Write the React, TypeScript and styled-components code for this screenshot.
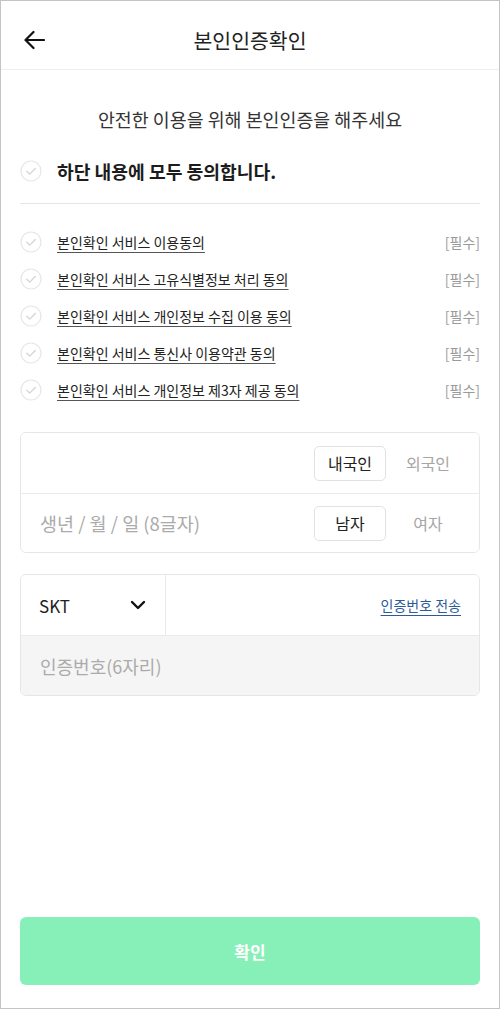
import React from "react";
import styled, { createGlobalStyle } from "styled-components";

const GlobalStyle = createGlobalStyle`
  html, body {
    margin: 0;
    padding: 0;
    background: #FFFFFF;
  }
  * {
    box-sizing: border-box;
  }
  body {
    font-family: "Noto Sans CJK KR", "Noto Sans", sans-serif;
    color: #222222;
  }
`;

const Frame = styled.div`
  width: 500px;
  height: 1009px;
  border: 1px solid #C4C4C4;
  display: flex;
  flex-direction: column;
  background: #FFFFFF;
`;

const Header = styled.header`
  height: 69px;
  flex-shrink: 0;
  border-bottom: 1px solid #EEEEEE;
  display: grid;
  grid-template-columns: 60px 1fr 60px;
  align-items: center;
  padding-top: 9px;
`;

const BackButton = styled.button`
  border: 0;
  background: none;
  padding: 0 0 0 22px;
  display: flex;
  align-items: center;
  cursor: pointer;
`;

const HeaderTitle = styled.h1`
  margin: 0;
  text-align: center;
  font-size: 20.5px;
  font-weight: 400;
  color: #222222;
  line-height: 26px;
`;

const Content = styled.main`
  display: flex;
  flex-direction: column;
  padding: 0 19px;
`;

const Subtitle = styled.p`
  margin: 37px 0 0;
  text-align: center;
  font-size: 18.4px;
  line-height: 24px;
  color: #333333;
`;

const AgreeAllRow = styled.label`
  margin-top: 28px;
  height: 24px;
  display: flex;
  align-items: center;
  gap: 15px;
  font-size: 18.2px;
  font-weight: 700;
  color: #1C1C1C;
`;

const Divider = styled.hr`
  margin: 20px 0 0;
  border: 0;
  border-top: 1px solid #E6E6E6;
`;

const TermsList = styled.ul`
  list-style: none;
  margin: 0;
  padding: 19px 0 0;
`;

const TermRow = styled.li`
  height: 37px;
  display: flex;
  align-items: center;
  gap: 15px;
`;

const TermLink = styled.a`
  flex: 1;
  font-size: 14px;
  color: #222222;
  text-decoration: underline;
  text-underline-offset: 4px;
  text-decoration-color: #555555;
`;

const Required = styled.span`
  font-size: 14px;
  color: #9A9A9A;
`;

const CheckCircle = styled.span`
  width: 22px;
  height: 22px;
  flex-shrink: 0;
  display: inline-flex;
  align-items: center;
  justify-content: center;
`;

const FormBox = styled.div<{ $top: number }>`
  margin-top: ${p => p.$top}px;
  border: 1px solid #E6E6E6;
  border-radius: 6px;
  overflow: hidden;
`;

const FormRow = styled.div<{ $muted?: boolean; $height: number }>`
  height: ${p => p.$height}px;
  display: flex;
  align-items: center;
  background: ${p => (p.$muted ? "#F5F5F5" : "#FFFFFF")};
  & + & {
    border-top: 1px solid #EBEBEB;
  }
`;

const Placeholder = styled.span<{ $size: number }>`
  flex: 1;
  padding-left: 19px;
  font-size: ${p => p.$size}px;
  color: #ABABAB;
`;

const ToggleGroup = styled.div`
  display: flex;
  gap: 6px;
  padding-right: 15px;
  margin-left: auto;
`;

const ToggleOption = styled.button<{ $active?: boolean }>`
  width: 72px;
  height: 35px;
  border-radius: 5px;
  border: 1px solid ${p => (p.$active ? "#E2E2E2" : "transparent")};
  background: #FFFFFF;
  font-family: inherit;
  font-size: 16px;
  color: ${p => (p.$active ? "#222222" : "#A6A6A6")};
  cursor: pointer;
  padding: 0;
`;

const CarrierSelect = styled.div`
  width: 145px;
  height: 100%;
  border-right: 1px solid #EBEBEB;
  display: flex;
  align-items: center;
  justify-content: space-between;
  padding: 0 19px 0 18px;
  font-size: 17px;
  color: #222222;
`;

const SendLink = styled.a`
  margin-left: auto;
  padding-right: 18px;
  font-size: 14px;
  color: #2D5B9A;
  text-decoration: underline;
  text-underline-offset: 4px;
`;

const Footer = styled.footer`
  margin-top: auto;
  padding: 0 19px 23px;
`;

const ConfirmButton = styled.button`
  width: 100%;
  height: 68px;
  border: 0;
  border-radius: 6px;
  background: #87F0B8;
  color: #FFFFFF;
  font-family: inherit;
  font-size: 17px;
  font-weight: 700;
  cursor: pointer;
`;

const terms = [
  "본인확인 서비스 이용동의",
  "본인확인 서비스 고유식별정보 처리 동의",
  "본인확인 서비스 개인정보 수집 이용 동의",
  "본인확인 서비스 통신사 이용약관 동의",
  "본인확인 서비스 개인정보 제3자 제공 동의",
];

function Check() {
  return (
    <CheckCircle>
      <svg width="22" height="22" viewBox="0 0 22 22" fill="none">
        <circle cx="11" cy="11" r="10" stroke="#E6E6E6" strokeWidth="1.2" />
        <path d="M6.8 11.2l2.9 2.9 5.6-5.6" stroke="#D4D4D4" strokeWidth="1.3" strokeLinecap="round" strokeLinejoin="round" />
      </svg>
    </CheckCircle>
  );
}

export default function App() {
  return (
    <>
      <GlobalStyle />
      <Frame>
        <Header>
          <BackButton aria-label="뒤로">
            <svg width="22" height="20" viewBox="0 0 22 20" fill="none">
              <path d="M21 10H3M10.5 2L2.5 10l8 8" stroke="#111111" strokeWidth="2.2" strokeLinecap="round" strokeLinejoin="round" />
            </svg>
          </BackButton>
          <HeaderTitle>본인인증확인</HeaderTitle>
          <span />
        </Header>

        <Content>
          <Subtitle>안전한 이용을 위해 본인인증을 해주세요</Subtitle>

          <AgreeAllRow>
            <Check />
            하단 내용에 모두 동의합니다.
          </AgreeAllRow>

          <Divider />

          <TermsList>
            {terms.map(t => (
              <TermRow key={t}>
                <Check />
                <TermLink>{t}</TermLink>
                <Required>[필수]</Required>
              </TermRow>
            ))}
          </TermsList>

          <FormBox $top={24}>
            <FormRow $height={60}>
              <ToggleGroup>
                <ToggleOption $active>내국인</ToggleOption>
                <ToggleOption>외국인</ToggleOption>
              </ToggleGroup>
            </FormRow>
            <FormRow $height={59}>
              <Placeholder $size={18.5}>생년 / 월 / 일 (8글자)</Placeholder>
              <ToggleGroup>
                <ToggleOption $active>남자</ToggleOption>
                <ToggleOption>여자</ToggleOption>
              </ToggleGroup>
            </FormRow>
          </FormBox>

          <FormBox $top={21}>
            <FormRow $height={60}>
              <CarrierSelect>
                SKT
                <svg width="16" height="10" viewBox="0 0 16 10" fill="none">
                  <path d="M2 2l6 6 6-6" stroke="#111111" strokeWidth="2.4" strokeLinecap="round" strokeLinejoin="round" />
                </svg>
              </CarrierSelect>
              <SendLink>인증번호 전송</SendLink>
            </FormRow>
            <FormRow $height={60} $muted>
              <Placeholder $size={18}>인증번호(6자리)</Placeholder>
            </FormRow>
          </FormBox>
        </Content>

        <Footer>
          <ConfirmButton>확인</ConfirmButton>
        </Footer>
      </Frame>
    </>
  );
}
